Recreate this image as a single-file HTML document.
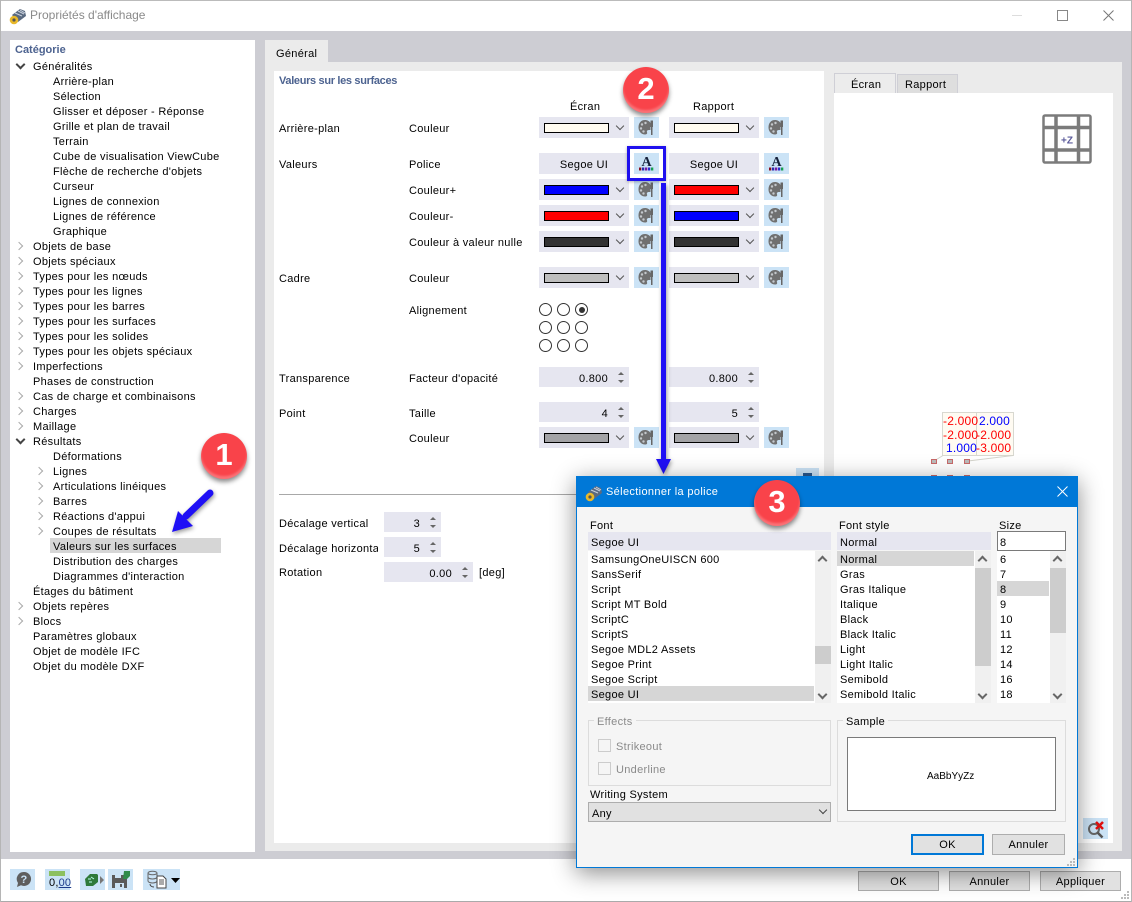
<!DOCTYPE html>
<html lang="fr"><head><meta charset="utf-8"><title>Propriétés d'affichage</title>
<style>
html,body{margin:0;padding:0}
body{width:1132px;height:902px;position:relative;overflow:hidden;background:#fff;font-family:"Liberation Sans",sans-serif;font-size:11px;letter-spacing:.3px;color:#000}
div,svg,span.a{position:absolute}
.t{white-space:nowrap;line-height:15px;height:15px;margin-top:3px}
.cb{background:#e6e6f0;width:90px;height:21px}
.sw{left:5px;top:6px;width:63px;height:8px;border:1px solid #000}
.ch{left:78px;top:6px;width:5px;height:5px;border-right:1px solid #555;border-bottom:1px solid #555;transform:rotate(45deg)}
.ib{width:25px;height:21px;background:#cbe3f6}
.ib svg{left:3px;top:1px}
.e,.c{width:5px;height:5px;border-right:2px solid #444;border-bottom:2px solid #444;transform:rotate(45deg);left:17px}
.c{border-color:#aaa;border-width:1.5px;transform:rotate(-45deg);left:16px}
.s1{left:36px}
.sp{background:#e6e6f0;height:20px}
.up,.dn{width:0;height:0;border-left:3px solid transparent;border-right:3px solid transparent}
.up{border-bottom:3px solid #666}.dn{border-top:3px solid #666}
.su,.sd{width:5px;height:5px;border-left:2px solid #666;border-top:2px solid #666;transform:rotate(45deg)}
.sd{transform:rotate(225deg)}
.r{width:11px;height:11px;border:1px solid #333;border-radius:50%;background:#fff}
.sel{background:#d6d6d6}
.btn{background:#e1e1e1;border:1px solid #adadad;box-sizing:border-box;text-align:center;line-height:20px}
.badge{width:46px;height:46px;border-radius:50%;background:#f9434a;box-shadow:0 3px 5px rgba(0,0,0,.45),inset 0 -3px 2px rgba(255,255,255,.25);color:#fff;font-weight:bold;font-size:31px;line-height:44px;text-align:center;letter-spacing:0}
.sb{background:#f0f0f0;width:16px}
.th{background:#cdcdcd;width:16px}
.grp{border:1px solid #dcdcdc;box-sizing:border-box}
.gr{color:#8a8a8a}
.v{color:#f00;font-size:12px;letter-spacing:.2px;line-height:14px;white-space:nowrap;text-align:right}
</style></head><body>
<svg width="0" height="0" style="left:0;top:0"><defs>
<symbol id="pal" viewBox="0 0 19 19"><path d="M8 2C4 2 1.500 5 1.500 9.500c0 4 3 7 6.500 7 2 0 2.500-1 2-2.300-.5-1.400.5-2.200 2-2.200h1.500V5C12.500 3.200 10.500 2 8 2z" fill="#707070"/><circle cx="5" cy="6.500" r="1.200" fill="#c4c8cc"/><circle cx="8.500" cy="5" r="1.200" fill="#c4c8cc"/><circle cx="4" cy="10.500" r="1.200" fill="#c4c8cc"/><circle cx="6.500" cy="13.500" r="1.200" fill="#c4c8cc"/><path d="M13.500 2.500h2.500v6.500h-.5v8h-1.500V9h-.5z" fill="#666"/></symbol>
<symbol id="fa" viewBox="0 0 19 19"><text x="9.500" y="12" font-family="Liberation Serif,serif" font-size="14" font-weight="bold" fill="#14203a" text-anchor="middle" letter-spacing="0">A</text><rect x="2" y="13.500" width="2.300" height="3" fill="#8a1020"/><rect x="5" y="13.500" width="2.300" height="3" fill="#2a2ab0"/><rect x="8" y="13.500" width="2.300" height="3" fill="#7a1aa0"/><rect x="11" y="13.500" width="2.300" height="3" fill="#2a2ad0"/><rect x="14" y="13.500" width="2.300" height="3" fill="#15a050"/></symbol>
<symbol id="logo" viewBox="0 0 18 18"><path d="M3 8 11 2l5 2 1 5-8 6z" fill="#5a6a80"/><path d="M6 6l7 3M9 4l6 3M11 3l5 3" stroke="#c8d0dc" stroke-width="1"/><circle cx="5" cy="13" r="4.300" fill="#e8b82a"/><circle cx="5" cy="13" r="1.600" fill="#555"/></symbol>
</defs></svg>

<!-- window frame -->
<div style="left:0;top:0;width:1132px;height:1px;background:#bbb"></div>
<div style="left:0;top:901px;width:1132px;height:1px;background:#aaa"></div>
<div style="left:0;top:31px;width:1132px;height:828px;background:#cdcdd3"></div>
<div style="left:1131px;top:0;width:1px;height:902px;background:#b5b5b5"></div>
<div style="left:0;top:0;width:1px;height:902px;background:#b5b5b5"></div>
<svg style="left:9px;top:7px" width="18" height="18"><use href="#logo"/></svg>
<div class="t gr" style="left:30px;top:5px;font-size:12px;letter-spacing:0">Propriétés d'affichage</div>
<div style="left:1012px;top:15px;width:10px;height:1px;background:#ddd"></div>
<div style="left:1057px;top:10px;width:9px;height:9px;border:1px solid #888"></div>
<svg style="left:1103px;top:10px" width="11" height="11"><path d="M.5.500l10 10M10.500.500l-10 10" stroke="#777" fill="none"/></svg>

<!-- tree -->
<div style="left:10px;top:40px;width:245px;height:812px;background:#fff"></div>
<div class="t" style="left:15px;top:40px;color:#4d6390;font-weight:bold;letter-spacing:0">Catégorie</div>
<div style="left:0;top:0;width:260px;height:700px">
<div class="e" style="top:61px"></div>
<div class="t" style="left:33px;top:57px">Généralités</div>
<div class="t" style="left:53px;top:72px">Arrière-plan</div>
<div class="t" style="left:53px;top:87px">Sélection</div>
<div class="t" style="left:53px;top:102px">Glisser et déposer - Réponse</div>
<div class="t" style="left:53px;top:117px">Grille et plan de travail</div>
<div class="t" style="left:53px;top:132px">Terrain</div>
<div class="t" style="left:53px;top:147px">Cube de visualisation ViewCube</div>
<div class="t" style="left:53px;top:162px">Flèche de recherche d'objets</div>
<div class="t" style="left:53px;top:177px">Curseur</div>
<div class="t" style="left:53px;top:192px">Lignes de connexion</div>
<div class="t" style="left:53px;top:207px">Lignes de référence</div>
<div class="t" style="left:53px;top:222px">Graphique</div>
<div class="c" style="top:243px"></div><div class="t" style="left:33px;top:237px">Objets de base</div>
<div class="c" style="top:258px"></div><div class="t" style="left:33px;top:252px">Objets spéciaux</div>
<div class="c" style="top:273px"></div><div class="t" style="left:33px;top:267px">Types pour les nœuds</div>
<div class="c" style="top:288px"></div><div class="t" style="left:33px;top:282px">Types pour les lignes</div>
<div class="c" style="top:303px"></div><div class="t" style="left:33px;top:297px">Types pour les barres</div>
<div class="c" style="top:318px"></div><div class="t" style="left:33px;top:312px">Types pour les surfaces</div>
<div class="c" style="top:333px"></div><div class="t" style="left:33px;top:327px">Types pour les solides</div>
<div class="c" style="top:348px"></div><div class="t" style="left:33px;top:342px">Types pour les objets spéciaux</div>
<div class="c" style="top:363px"></div><div class="t" style="left:33px;top:357px">Imperfections</div>
<div class="t" style="left:33px;top:372px">Phases de construction</div>
<div class="c" style="top:393px"></div><div class="t" style="left:33px;top:387px">Cas de charge et combinaisons</div>
<div class="c" style="top:408px"></div><div class="t" style="left:33px;top:402px">Charges</div>
<div class="c" style="top:423px"></div><div class="t" style="left:33px;top:417px">Maillage</div>
<div class="e" style="top:436px"></div><div class="t" style="left:33px;top:432px">Résultats</div>
<div class="t" style="left:53px;top:447px">Déformations</div>
<div class="c s1" style="top:468px"></div><div class="t" style="left:53px;top:462px">Lignes</div>
<div class="c s1" style="top:483px"></div><div class="t" style="left:53px;top:477px">Articulations linéiques</div>
<div class="c s1" style="top:498px"></div><div class="t" style="left:53px;top:492px">Barres</div>
<div class="c s1" style="top:513px"></div><div class="t" style="left:53px;top:507px">Réactions d'appui</div>
<div class="c s1" style="top:528px"></div><div class="t" style="left:53px;top:522px">Coupes de résultats</div>
<div class="sel" style="left:50px;top:538px;width:171px;height:15px"></div>
<div class="t" style="left:53px;top:537px">Valeurs sur les surfaces</div>
<div class="t" style="left:53px;top:552px">Distribution des charges</div>
<div class="t" style="left:53px;top:567px">Diagrammes d'interaction</div>
<div class="t" style="left:33px;top:582px">Étages du bâtiment</div>
<div class="c" style="top:603px"></div><div class="t" style="left:33px;top:597px">Objets repères</div>
<div class="c" style="top:618px"></div><div class="t" style="left:33px;top:612px">Blocs</div>
<div class="t" style="left:33px;top:627px">Paramètres globaux</div>
<div class="t" style="left:33px;top:642px">Objet de modèle IFC</div>
<div class="t" style="left:33px;top:657px">Objet du modèle DXF</div>
</div>

<!-- tab area -->
<div style="left:265px;top:40px;width:63px;height:23px;background:#ebebeb"></div>
<div class="t" style="left:276px;top:44px">Général</div>
<div style="left:265px;top:62px;width:857px;height:789px;background:#ebebeb"></div>
<div style="left:274px;top:71px;width:550px;height:772px;background:#fff"></div>

<!-- right preview -->
<div style="left:834px;top:73px;width:62px;height:20px;background:#ececec;border:1px solid #cfcfd6;border-bottom:0;box-sizing:border-box"></div>
<div class="t" style="left:851px;top:75px">Écran</div>
<div style="left:897px;top:74px;width:61px;height:19px;background:#dedede;border:1px solid #cfcfd6;border-bottom:0;box-sizing:border-box"></div>
<div class="t" style="left:905px;top:75px">Rapport</div>
<div style="left:834px;top:93px;width:279px;height:750px;background:#fff"></div>
<svg style="left:1042px;top:114px" width="50" height="50"><g fill="none" stroke="#7b7b7b"><rect x="1.500" y="1.500" width="47" height="47" rx="1.500" stroke-width="2.500"/><path d="M14 1v48M36.500 1v48M1 13.500h48M1 36h48" stroke-width="3.500"/></g><text x="25" y="29.500" font-family="Liberation Sans,sans-serif" font-size="10" font-weight="bold" fill="#5b5b9b" text-anchor="middle" letter-spacing="0">+Z</text></svg>
<div style="left:942px;top:412px;width:39px;height:44px;background:#fffbf2;border:1px solid #d8d8d0;box-sizing:border-box"></div>
<div style="left:976px;top:412px;width:38px;height:44px;background:#fffbf2;border:1px solid #d8d8d0;box-sizing:border-box"></div>
<div class="v" style="left:943px;top:414px;width:34px">-2.000</div>
<div class="v" style="left:943px;top:428px;width:34px">-2.000</div>
<div class="v" style="left:943px;top:441px;width:34px;color:#00f">1.000</div>
<div class="v" style="left:976px;top:414px;width:34px;color:#00f">2.000</div>
<div class="v" style="left:976px;top:428px;width:34px">-2.000</div>
<div class="v" style="left:976px;top:441px;width:34px">-3.000</div>
<svg style="left:927px;top:446px" width="90" height="36"><path d="M7 15 16 9.500M41 15l45-5.500" stroke="#d4d4cc" fill="none"/><g fill="#bbb" stroke="#c86a6a"><rect x="4.500" y="13.500" width="5" height="4"/><rect x="20.500" y="13.500" width="5" height="4"/><rect x="37.500" y="13.500" width="5" height="4"/><rect x="4.500" y="29.500" width="5" height="4"/><rect x="20.500" y="29.500" width="5" height="4"/><rect x="37.500" y="29.500" width="5" height="4"/></g></svg>
<div class="ib" style="left:1083px;top:818px"><svg width="22" height="20" style="left:2px;top:1px"><circle cx="9" cy="10" r="5" fill="none" stroke="#666" stroke-width="2"/><path d="M12.500 13.500l5 5" stroke="#555" stroke-width="2.500"/><path d="M11 3l7 7M18 3l-7 7" stroke="#e01010" stroke-width="2.500"/></svg></div>

<!-- form -->
<div class="t" style="left:279px;top:71px;color:#4d6390;font-weight:bold;letter-spacing:-.33px">Valeurs sur les surfaces</div>
<div class="t" style="left:570px;top:97px">Écran</div>
<div class="t" style="left:693px;top:97px">Rapport</div>

<div class="t" style="left:279px;top:119px">Arrière-plan</div>
<div class="t" style="left:409px;top:119px">Couleur</div>
<div class="t" style="left:279px;top:155px">Valeurs</div>
<div class="t" style="left:409px;top:155px">Police</div>
<div class="t" style="left:409px;top:181px">Couleur+</div>
<div class="t" style="left:409px;top:207px">Couleur-</div>
<div class="t" style="left:409px;top:233px">Couleur à valeur nulle</div>
<div class="t" style="left:279px;top:269px">Cadre</div>
<div class="t" style="left:409px;top:269px">Couleur</div>
<div class="t" style="left:409px;top:301px">Alignement</div>
<div class="t" style="left:279px;top:369px">Transparence</div>
<div class="t" style="left:409px;top:369px">Facteur d'opacité</div>
<div class="t" style="left:279px;top:404px">Point</div>
<div class="t" style="left:409px;top:404px">Taille</div>
<div class="t" style="left:409px;top:429px">Couleur</div>

<!-- row bg -->
<div class="cb" style="left:539px;top:117px"><div class="sw" style="background:#fffbf0"></div><div class="ch"></div></div>
<div class="ib" style="left:634px;top:117px"><svg width="19" height="19"><use href="#pal"/></svg></div>
<div class="cb" style="left:669px;top:117px"><div class="sw" style="background:#fffbf0"></div><div class="ch"></div></div>
<div class="ib" style="left:764px;top:117px"><svg width="19" height="19"><use href="#pal"/></svg></div>
<!-- font -->
<div class="cb" style="left:539px;top:153px;text-align:center;line-height:25px">Segoe UI</div>
<div class="ib" style="left:634px;top:153px"><svg width="19" height="19"><use href="#fa"/></svg></div>
<div class="cb" style="left:669px;top:153px;text-align:center;line-height:25px">Segoe UI</div>
<div class="ib" style="left:764px;top:153px"><svg width="19" height="19"><use href="#fa"/></svg></div>
<!-- + -->
<div class="cb" style="left:539px;top:179px"><div class="sw" style="background:#00f"></div><div class="ch"></div></div>
<div class="ib" style="left:634px;top:179px"><svg width="19" height="19"><use href="#pal"/></svg></div>
<div class="cb" style="left:669px;top:179px"><div class="sw" style="background:#f00"></div><div class="ch"></div></div>
<div class="ib" style="left:764px;top:179px"><svg width="19" height="19"><use href="#pal"/></svg></div>
<!-- - -->
<div class="cb" style="left:539px;top:205px"><div class="sw" style="background:#f00"></div><div class="ch"></div></div>
<div class="ib" style="left:634px;top:205px"><svg width="19" height="19"><use href="#pal"/></svg></div>
<div class="cb" style="left:669px;top:205px"><div class="sw" style="background:#00f"></div><div class="ch"></div></div>
<div class="ib" style="left:764px;top:205px"><svg width="19" height="19"><use href="#pal"/></svg></div>
<!-- 0 -->
<div class="cb" style="left:539px;top:231px"><div class="sw" style="background:#333"></div><div class="ch"></div></div>
<div class="ib" style="left:634px;top:231px"><svg width="19" height="19"><use href="#pal"/></svg></div>
<div class="cb" style="left:669px;top:231px"><div class="sw" style="background:#333"></div><div class="ch"></div></div>
<div class="ib" style="left:764px;top:231px"><svg width="19" height="19"><use href="#pal"/></svg></div>
<!-- cadre -->
<div class="cb" style="left:539px;top:267px"><div class="sw" style="background:#bebebe"></div><div class="ch"></div></div>
<div class="ib" style="left:634px;top:267px"><svg width="19" height="19"><use href="#pal"/></svg></div>
<div class="cb" style="left:669px;top:267px"><div class="sw" style="background:#bebebe"></div><div class="ch"></div></div>
<div class="ib" style="left:764px;top:267px"><svg width="19" height="19"><use href="#pal"/></svg></div>
<!-- radios -->
<div class="r" style="left:539px;top:303px"></div><div class="r" style="left:557px;top:303px"></div><div class="r" style="left:575px;top:303px"><div style="left:2.500px;top:2.500px;width:6px;height:6px;border-radius:50%;background:#333"></div></div>
<div class="r" style="left:539px;top:321px"></div><div class="r" style="left:557px;top:321px"></div><div class="r" style="left:575px;top:321px"></div>
<div class="r" style="left:539px;top:339px"></div><div class="r" style="left:557px;top:339px"></div><div class="r" style="left:575px;top:339px"></div>
<!-- spins -->
<div class="sp" style="left:539px;top:367px;width:90px"><div class="t" style="right:21px;top:2px">0.800</div><div class="up" style="left:79px;top:5px"></div><div class="dn" style="left:79px;top:13px"></div></div>
<div class="sp" style="left:669px;top:367px;width:90px"><div class="t" style="right:21px;top:2px">0.800</div><div class="up" style="left:79px;top:5px"></div><div class="dn" style="left:79px;top:13px"></div></div>
<div class="sp" style="left:539px;top:402px;width:90px"><div class="t" style="right:21px;top:2px">4</div><div class="up" style="left:79px;top:5px"></div><div class="dn" style="left:79px;top:13px"></div></div>
<div class="sp" style="left:669px;top:402px;width:90px"><div class="t" style="right:21px;top:2px">5</div><div class="up" style="left:79px;top:5px"></div><div class="dn" style="left:79px;top:13px"></div></div>
<!-- point colour -->
<div class="cb" style="left:539px;top:427px"><div class="sw" style="background:#a3a3a6"></div><div class="ch"></div></div>
<div class="ib" style="left:634px;top:427px"><svg width="19" height="19"><use href="#pal"/></svg></div>
<div class="cb" style="left:669px;top:427px"><div class="sw" style="background:#a3a3a6"></div><div class="ch"></div></div>
<div class="ib" style="left:764px;top:427px"><svg width="19" height="19"><use href="#pal"/></svg></div>
<div class="ib" style="left:796px;top:468px;width:23px;height:10px"><div style="left:7px;top:5px;width:9px;height:3px;background:#2a5a90"></div></div>

<div style="left:279px;top:494px;width:330px;height:1px;background:#a8a8a8"></div>
<div class="t" style="left:279px;top:514px">Décalage vertical</div>
<div class="t" style="left:279px;top:539px;width:99px;overflow:hidden">Décalage horizonta</div>
<div class="t" style="left:279px;top:563px">Rotation</div>
<div class="sp" style="left:384px;top:512px;width:57px"><div class="t" style="right:21px;top:2px">3</div><div class="up" style="left:46px;top:5px"></div><div class="dn" style="left:46px;top:13px"></div></div>
<div class="sp" style="left:384px;top:537px;width:57px"><div class="t" style="right:21px;top:2px">5</div><div class="up" style="left:46px;top:5px"></div><div class="dn" style="left:46px;top:13px"></div></div>
<div class="sp" style="left:384px;top:562px;width:89px"><div class="t" style="right:21px;top:2px">0.00</div><div class="up" style="left:78px;top:5px"></div><div class="dn" style="left:78px;top:13px"></div></div>
<div class="t" style="left:479px;top:563px">[deg]</div>

<!-- bottom toolbar -->
<div class="ib" style="left:10px;top:869px"><svg width="20" height="19" style="left:3px;top:1px"><path d="M11 2a7 7 0 1 1-3 13.300L4 17l1-4A7 7 0 0 1 11 2z" fill="#5f5f5f"/><text x="11" y="13" font-family="Liberation Sans,sans-serif" font-size="11" font-weight="bold" fill="#cbe3f6" text-anchor="middle">?</text></svg></div>
<div class="ib" style="left:45px;top:869px"><div style="left:4px;top:2px;width:16px;height:5px;background:#8cc060"></div><div style="left:4px;top:7px;font-size:11px;letter-spacing:.2px;line-height:14px;white-space:nowrap;color:#000"><span>0,</span><span style="text-decoration:underline;color:#1a3a8a">00</span></div></div>
<div class="ib" style="left:80px;top:869px"><svg width="22" height="19" style="left:3px;top:1px"><path d="M2 9 7 4h7l1 1v7l-5 4H3z" fill="#2f7a3a"/><path d="M5 9h3M8 7l3 2M6 12h3" stroke="#bfe" fill="none"/><path d="M17 6l4 4-4 4z" fill="#777"/></svg></div>
<div class="ib" style="left:108px;top:869px"><svg width="22" height="19" style="left:3px;top:1px"><path d="M1 5h12l3 3v10H1z" fill="#5a5a5a"/><rect x="4" y="5" width="6" height="3" fill="#cbe3f6"/><rect x="4" y="13" width="9" height="5" fill="#cbe3f6"/><rect x="9" y="14" width="2" height="3" fill="#5a5a5a"/><path d="M13 1h6v5l-3 3h-4z" fill="#2f8a4a"/></svg></div>
<div class="ib" style="left:143px;top:869px;width:37px"><svg width="36" height="21" style="left:3px;top:0"><g fill="none" stroke="#666"><ellipse cx="6.500" cy="4" rx="4.500" ry="1.800"/><path d="M2 4v8c0 1 2 2 4.500 2s4.500-1 4.500-2V4M2 8c0 1 2 2 4.500 2S11 9 11 8"/><path d="M4 15c0 2 2 3 4 3" stroke="#444"/></g><path d="M11 7h6l3 3v9h-9z" fill="#fff" stroke="#444"/><path d="M13 11h5M13 13h5M13 15h5" stroke="#555"/><path d="M25 9h9l-4.500 5z" fill="#000"/></svg></div>
<div class="btn" style="left:858px;top:871px;width:81px;height:20px">OK</div>
<div class="btn" style="left:949px;top:871px;width:81px;height:20px">Annuler</div>
<div class="btn" style="left:1040px;top:871px;width:81px;height:20px">Appliquer</div>
<svg style="left:1120px;top:890px" width="10" height="10"><g fill="#bbb"><rect x="7" y="1" width="2" height="2"/><rect x="4" y="4" width="2" height="2"/><rect x="7" y="4" width="2" height="2"/><rect x="1" y="7" width="2" height="2"/><rect x="4" y="7" width="2" height="2"/><rect x="7" y="7" width="2" height="2"/></g></svg>

<!-- blue annotation -->
<div style="left:627px;top:146px;width:39px;height:35px;box-sizing:border-box;border:3.500px solid #1f10ee;box-shadow:0 1px 3px rgba(0,0,0,.3)"></div>
<svg style="left:650px;top:180px;filter:drop-shadow(1px 2px 2px rgba(0,0,0,.4))" width="28" height="298"><path d="M11 3h5v276h5l-7.500 15L6 279h5z" fill="#1f10f5"/></svg>
<svg style="left:160px;top:480px;filter:drop-shadow(1px 2px 2px rgba(0,0,0,.4))" width="65" height="60"><path d="M50 13 26 36" stroke="#1f10f5" stroke-width="7" stroke-linecap="round" fill="none"/><path d="M12 52l6-21 15 15z" fill="#1f10f5"/></svg>

<!-- font dialog -->
<div style="left:576px;top:476px;width:502px;height:392px;box-sizing:border-box;background:#f5f5f5;border:1px solid #0078d7;box-shadow:0 5px 22px rgba(0,0,0,.45)">
<div style="left:0;top:0;width:500px;height:30px;background:#0078d7"></div>
</div>
<svg style="left:585px;top:484px" width="18" height="18"><use href="#logo"/></svg>
<div class="t" style="left:606px;top:482px;color:#fff;letter-spacing:.35px">Sélectionner la police</div>
<svg style="left:1057px;top:486px" width="11" height="11"><path d="M.5.500l10 10M10.500.500l-10 10" stroke="#fff" fill="none"/></svg>

<div class="t" style="left:590px;top:516px">Font</div>
<div style="left:588px;top:532px;width:243px;height:18px;background:#e6e6f0"></div>
<div class="t" style="left:591px;top:533px">Segoe UI</div>
<div style="left:588px;top:551px;width:227px;height:152px;background:#fff"></div>
<div class="sb" style="left:815px;top:551px;height:152px"></div>
<div class="th" style="left:815px;top:646px;height:18px"></div>
<div class="su" style="left:819px;top:557px"></div>
<div class="sd" style="left:819px;top:691px"></div>
<div class="sel" style="left:588px;top:686px;width:226px;height:15px"></div>
<div class="t" style="left:591px;top:550px">SamsungOneUISCN 600</div>
<div class="t" style="left:591px;top:565px">SansSerif</div>
<div class="t" style="left:591px;top:580px">Script</div>
<div class="t" style="left:591px;top:595px">Script MT Bold</div>
<div class="t" style="left:591px;top:610px">ScriptC</div>
<div class="t" style="left:591px;top:625px">ScriptS</div>
<div class="t" style="left:591px;top:640px">Segoe MDL2 Assets</div>
<div class="t" style="left:591px;top:655px">Segoe Print</div>
<div class="t" style="left:591px;top:670px">Segoe Script</div>
<div class="t" style="left:591px;top:685px">Segoe UI</div>

<div class="t" style="left:839px;top:516px">Font style</div>
<div style="left:837px;top:532px;width:154px;height:18px;background:#e6e6f0"></div>
<div class="t" style="left:840px;top:533px">Normal</div>
<div style="left:837px;top:551px;width:138px;height:152px;background:#fff"></div>
<div class="sb" style="left:975px;top:551px;height:152px"></div>
<div class="th" style="left:975px;top:568px;height:98px"></div>
<div class="su" style="left:979px;top:557px"></div>
<div class="sd" style="left:979px;top:691px"></div>
<div class="sel" style="left:837px;top:551px;width:137px;height:15px"></div>
<div class="t" style="left:840px;top:550px">Normal</div>
<div class="t" style="left:840px;top:565px">Gras</div>
<div class="t" style="left:840px;top:580px">Gras Italique</div>
<div class="t" style="left:840px;top:595px">Italique</div>
<div class="t" style="left:840px;top:610px">Black</div>
<div class="t" style="left:840px;top:625px">Black Italic</div>
<div class="t" style="left:840px;top:640px">Light</div>
<div class="t" style="left:840px;top:655px">Light Italic</div>
<div class="t" style="left:840px;top:670px">Semibold</div>
<div class="t" style="left:840px;top:685px">Semibold Italic</div>

<div class="t" style="left:999px;top:516px">Size</div>
<div style="left:997px;top:531px;width:69px;height:20px;box-sizing:border-box;background:#fff;border:1px solid #7a7a7a"></div>
<div class="t" style="left:1000px;top:533px">8</div>
<div style="left:997px;top:551px;width:53px;height:152px;background:#fff"></div>
<div class="sb" style="left:1050px;top:551px;height:152px"></div>
<div class="th" style="left:1050px;top:568px;height:65px"></div>
<div class="su" style="left:1054px;top:557px"></div>
<div class="sd" style="left:1054px;top:691px"></div>
<div class="sel" style="left:997px;top:581px;width:52px;height:15px"></div>
<div class="t" style="left:1000px;top:550px">6</div>
<div class="t" style="left:1000px;top:565px">7</div>
<div class="t" style="left:1000px;top:580px">8</div>
<div class="t" style="left:1000px;top:595px">9</div>
<div class="t" style="left:1000px;top:610px">10</div>
<div class="t" style="left:1000px;top:625px">11</div>
<div class="t" style="left:1000px;top:640px">12</div>
<div class="t" style="left:1000px;top:655px">14</div>
<div class="t" style="left:1000px;top:670px">16</div>
<div class="t" style="left:1000px;top:685px">18</div>

<div class="grp" style="left:588px;top:720px;width:243px;height:66px"></div>
<div class="t gr" style="left:594px;top:712px;background:#f5f5f5;padding:0 3px">Effects</div>
<div style="left:598px;top:739px;width:11px;height:11px;border:1px solid #ccc"></div>
<div class="t gr" style="left:616px;top:737px">Strikeout</div>
<div style="left:598px;top:762px;width:11px;height:11px;border:1px solid #ccc"></div>
<div class="t gr" style="left:616px;top:760px">Underline</div>
<div class="t" style="left:590px;top:785px">Writing System</div>
<div style="left:588px;top:802px;width:243px;height:20px;box-sizing:border-box;background:#e1e1e1;border:1px solid #adadad"></div>
<div class="t" style="left:592px;top:804px">Any</div>
<div class="ch" style="left:820px;top:807px;border-color:#444"></div>

<div class="grp" style="left:837px;top:720px;width:229px;height:102px"></div>
<div class="t" style="left:843px;top:712px;background:#f5f5f5;padding:0 3px">Sample</div>
<div style="left:847px;top:737px;width:209px;height:74px;box-sizing:border-box;background:#fff;border:1px solid #7a7a7a"></div>
<div class="t" style="left:927px;top:766px;letter-spacing:0;font-size:10px">AaBbYyZz</div>

<div class="btn" style="left:911px;top:834px;width:73px;height:21px;border:2px solid #0078d7;line-height:19px">OK</div>
<div class="btn" style="left:992px;top:834px;width:73px;height:21px;line-height:21px">Annuler</div>
<svg style="left:1066px;top:857px" width="10" height="10"><g fill="#bbb"><rect x="7" y="1" width="2" height="2"/><rect x="4" y="4" width="2" height="2"/><rect x="7" y="4" width="2" height="2"/><rect x="1" y="7" width="2" height="2"/><rect x="4" y="7" width="2" height="2"/><rect x="7" y="7" width="2" height="2"/></g></svg>

<!-- badges -->
<div class="badge" style="left:201px;top:433px">1</div>
<div class="badge" style="left:623px;top:67px">2</div>
<div class="badge" style="left:754px;top:480px">3</div>
</body></html>
